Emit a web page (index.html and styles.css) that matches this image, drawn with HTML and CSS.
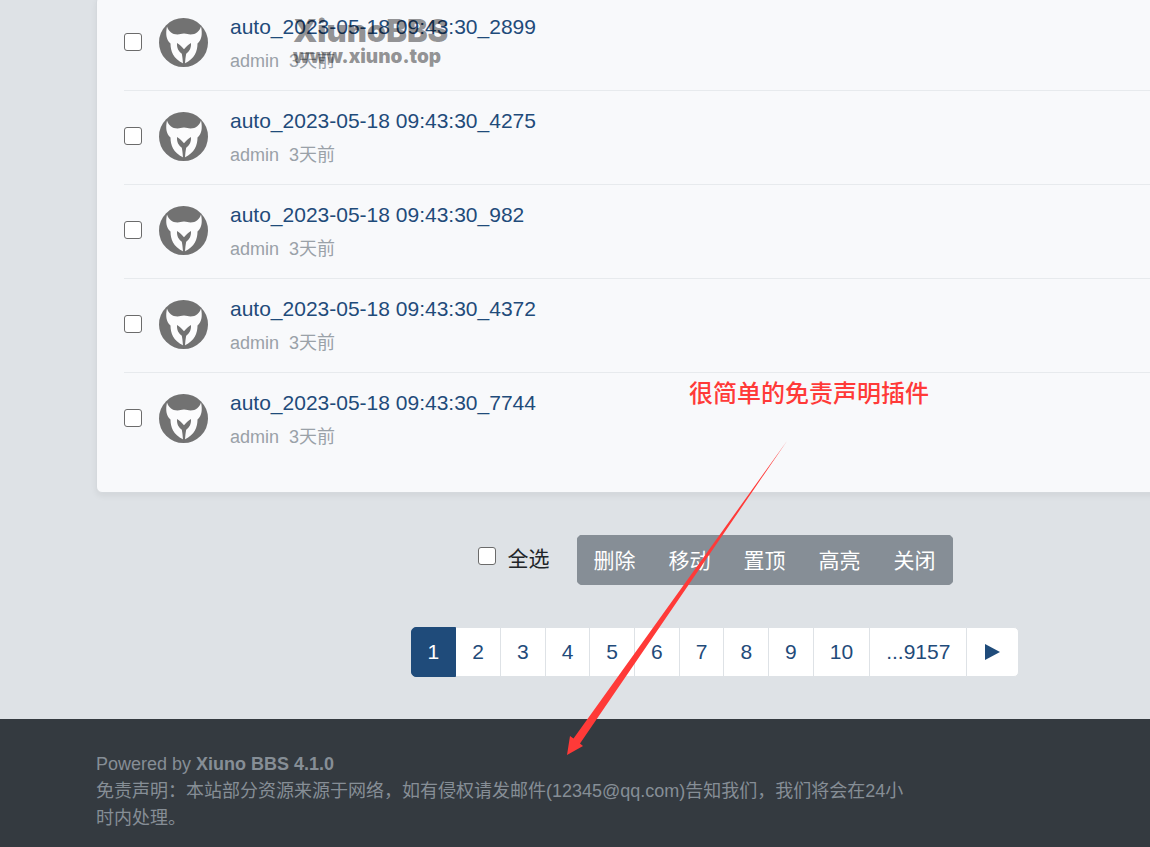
FILE: index.html
```
<!DOCTYPE html>
<html lang="zh-CN">
<head>
  <meta charset="UTF-8" />
  <meta name="viewport" content="width=device-width, initial-scale=1.0" />
  <title>Xiuno BBS</title>
  <link rel="stylesheet" href="styles.css">
</head>
<body>
  <!-- avatar shared by every thread -->
  <svg class="sprite" aria-hidden="true">
    <symbol id="avatar" viewBox="0 0 49 49">
      <circle cx="24.5" cy="24.5" r="24.5" fill="#727272"/>
      <path fill="#fcfcfd" d="M8 8.500C9.500 13 13 16.500 18.500 16.500C21 16.500 22 15.500 25 15.500S29 16.500 31.500 16.500C37 16.500 40.500 13 42 8.500C43.500 15.500 43 21.500 38.500 25.500C38.500 33 36 40.500 25.700 45.500H24.300C14 40.500 11.500 33 11.500 25.500C7 21.500 6.500 15.500 8 8.500Z"/>
      <path fill="#727272" d="M18 25C20.500 26.500 23 28.800 25 31.200C27 28.800 29.500 26.500 32 25C32.300 30.500 30.500 33 27.200 35.800C26.600 38.500 26.300 42 26 46H24C23.700 42 23.400 38.500 22.800 35.800C19.500 33 17.700 30.500 18 25Z"/>
    </symbol>
  </svg>

  <main class="container">
    <section class="card">
      <ul class="threadlist">
        <li class="thread">
          <input type="checkbox" class="check" aria-label="auto_2023-05-18 09:43:30_2899" />
          <svg class="avatar"><use href="#avatar"/></svg>
          <div class="media-body">
            <a class="subject" href="#">auto_2023-05-18 09:43:30_2899</a>
            <div class="meta"><span>admin</span><span>3天前</span></div>
          </div>
        </li>
        <li class="thread">
          <input type="checkbox" class="check" aria-label="auto_2023-05-18 09:43:30_4275" />
          <svg class="avatar"><use href="#avatar"/></svg>
          <div class="media-body">
            <a class="subject" href="#">auto_2023-05-18 09:43:30_4275</a>
            <div class="meta"><span>admin</span><span>3天前</span></div>
          </div>
        </li>
        <li class="thread">
          <input type="checkbox" class="check" aria-label="auto_2023-05-18 09:43:30_982" />
          <svg class="avatar"><use href="#avatar"/></svg>
          <div class="media-body">
            <a class="subject" href="#">auto_2023-05-18 09:43:30_982</a>
            <div class="meta"><span>admin</span><span>3天前</span></div>
          </div>
        </li>
        <li class="thread">
          <input type="checkbox" class="check" aria-label="auto_2023-05-18 09:43:30_4372" />
          <svg class="avatar"><use href="#avatar"/></svg>
          <div class="media-body">
            <a class="subject" href="#">auto_2023-05-18 09:43:30_4372</a>
            <div class="meta"><span>admin</span><span>3天前</span></div>
          </div>
        </li>
        <li class="thread">
          <input type="checkbox" class="check" aria-label="auto_2023-05-18 09:43:30_7744" />
          <svg class="avatar"><use href="#avatar"/></svg>
          <div class="media-body">
            <a class="subject" href="#">auto_2023-05-18 09:43:30_7744</a>
            <div class="meta"><span>admin</span><span>3天前</span></div>
          </div>
        </li>
      </ul>
    </section>

    <div class="toolbar">
      <label class="check-all"><input type="checkbox" class="check" />全选</label>
      <div class="btn-group">
        <button class="btn">删除</button>
        <button class="btn">移动</button>
        <button class="btn">置顶</button>
        <button class="btn">高亮</button>
        <button class="btn">关闭</button>
      </div>
    </div>

    <nav class="pagination">
      <a class="page active" href="#">1</a>
      <a class="page" href="#">2</a>
      <a class="page" href="#">3</a>
      <a class="page" href="#">4</a>
      <a class="page" href="#">5</a>
      <a class="page" href="#">6</a>
      <a class="page" href="#">7</a>
      <a class="page" href="#">8</a>
      <a class="page" href="#">9</a>
      <a class="page" href="#">10</a>
      <a class="page" href="#">...9157</a>
      <a class="page next" href="#" aria-label="下一页">
        <svg width="17" height="18" viewBox="0 0 17 18"><path fill="currentColor" d="M1 1L16 9L1 17Z"/></svg>
      </a>
    </nav>
  </main>

  <footer class="footer">
    <div class="footer-text">
      Powered by <b>Xiuno BBS 4.1.0</b><br>
      免责声明：本站部分资源来源于网络，如有侵权请发邮件(12345@qq.com)告知我们，我们将会在24小时内处理。
    </div>
  </footer>

  <div class="watermark">
    <div class="watermark-name">XiunoBBS</div>
    <div class="watermark-url">www.xiuno.top</div>
  </div>

  <div class="note">很简单的免责声明插件</div>
  <svg class="arrow" viewBox="0 0 222 314">
    <path fill="#ff3a38" d="M221 0L14 302.500L17 305L1 314L4 295L7.500 297.500Z"/>
  </svg>
</body>
</html>
```
FILE: styles.css
```
:root {
  --bg: #dee2e6;
  --link: #1f4b7a;
  --gray: #868e96;
  --red: #ff3a38;
}
* {
  margin: 0;
  padding: 0;
  box-sizing: border-box;
}
body {
  position: relative;
  min-height: 100vh;
  display: flex;
  flex-direction: column;
  overflow-x: hidden;
  background: var(--bg);
  color: #212529;
  font-family: "Liberation Sans", "Noto Sans CJK SC", sans-serif;
  font-size: 21px;
}
a {
  color: var(--link);
  text-decoration: none;
}
.sprite {
  position: absolute;
  width: 0;
  height: 0;
}
.container {
  min-width: 1238px;
  margin: -4px 0 42px 96px;
}
.card {
  padding: 0 27px 26px;
  background: #f8f9fb;
  border: 1px solid #d5d9dd;
  border-radius: 6px;
  box-shadow: 0 3px 6px rgba(0, 0, 0, 0.06);
}
.threadlist {
  list-style: none;
}
.thread {
  display: flex;
  align-items: center;
  padding: 12px 0 11px;
  border-bottom: 1px solid #e7eaed;
}
.thread:last-child {
  border-bottom: none;
}
.check {
  appearance: none;
  width: 18px;
  height: 18px;
  margin-bottom: 5px;
  background: #fff;
  border: 1px solid #6b6b6b;
  border-radius: 3px;
}
.check:checked {
  background: var(--link);
}
.avatar {
  width: 49px;
  height: 49px;
  margin: 0 22px 4px 17px;
}
.subject {
  display: block;
  line-height: 35px;
}
.meta {
  display: flex;
  gap: 10px;
  font-size: 18px;
  line-height: 35px;
  color: #9aa1a8;
}
.toolbar {
  display: flex;
  justify-content: center;
  align-items: center;
  gap: 27px;
  margin: 42px 0;
}
.check-all {
  display: flex;
  align-items: center;
  gap: 12px;
  padding-bottom: 6px;
}
.check-all .check {
  margin-bottom: 3px;
}
.btn-group {
  display: flex;
  border-radius: 5px;
  overflow: hidden;
}
.btn {
  height: 50px;
  padding: 0 16px 2px;
  border: 1px solid var(--gray);
  background: var(--gray);
  color: #fff;
  font: inherit;
  cursor: pointer;
}
.btn + .btn,
.page + .page {
  margin-left: -1px;
}
.pagination {
  display: flex;
  justify-content: center;
}
.page {
  padding: 0 16px;
  line-height: 48px;
  background: #fff;
  border: 1px solid var(--bg);
}
.page.active {
  position: relative;
  background: #1f4b7a;
  border-color: #1f4b7a;
  border-radius: 5px 0 0 5px;
  color: #fff;
}
.page.next {
  display: flex;
  align-items: center;
  padding: 0 17px;
  border-radius: 0 5px 5px 0;
}
.footer {
  flex: 1;
  padding: 32px 96px 14px;
  background: #343a40;
  color: var(--gray);
  font-size: 18px;
  line-height: 27px;
}
.footer-text {
  max-width: 824px;
}

/* things drawn over the page */
.watermark {
  position: absolute;
  top: 14px;
  left: 293px;
  font-family: Inter, sans-serif;
  font-weight: 900;
  color: rgba(0, 0, 0, 0.42);
  pointer-events: none;
}
.watermark-name {
  font-size: 31px;
  line-height: 33px;
}
.watermark-url {
  font-size: 19px;
  line-height: 20px;
}
.note {
  position: absolute;
  top: 376px;
  left: 689px;
  font-size: 24px;
  font-weight: 500;
  line-height: 36px;
  color: var(--red);
}
.arrow {
  position: absolute;
  top: 441px;
  left: 566px;
  width: 222px;
  height: 314px;
  pointer-events: none;
}
```
